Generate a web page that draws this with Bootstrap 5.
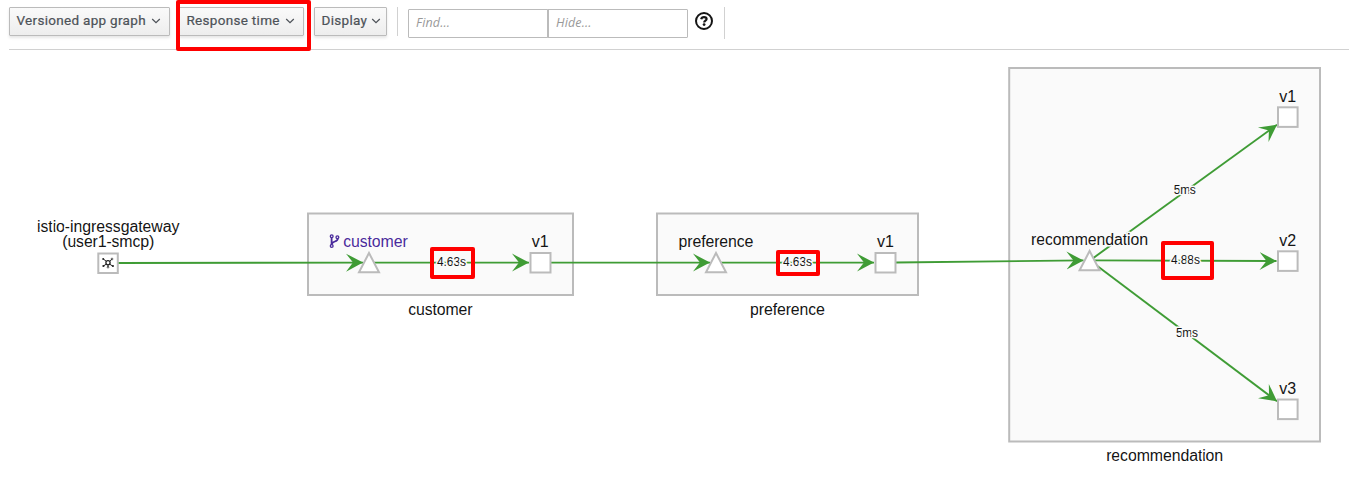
<!DOCTYPE html>
<html lang="en">
<head>
<meta charset="utf-8">
<meta name="viewport" content="width=device-width, initial-scale=1">
<title>Service graph</title>
<link href="https://cdn.jsdelivr.net/npm/bootstrap@5.3.0/dist/css/bootstrap.min.css" rel="stylesheet">
<style>
  body { background: #fff; font-family: "Overpass", "Noto Sans", sans-serif; overflow: hidden; }
  .graph-toolbar { height: 50px; margin-left: 9px; padding-top: 7px; border-bottom: 1px solid #d1d1d1; }
  .btn-graph {
    --bs-btn-color: #4d5258; --bs-btn-border-color: #bbb; --bs-btn-border-radius: 1px;
    --bs-btn-hover-color: #4d5258; --bs-btn-hover-border-color: #bbb;
    height: 29px; padding: 0 8px 2px 6.5px; font: 400 13.5px/25px Roboto, sans-serif;
    letter-spacing: .3px; white-space: nowrap; -webkit-text-stroke: .2px #4d5258;
    background: linear-gradient(#fafafa, #ededed); box-shadow: 0 2px 3px rgba(3,3,3,.1);
  }
  .btn-versions { width: 161px; margin-right: 10px; }
  .btn-edges { width: 125px; margin-right: 9px; }
  .btn-display { width: 73px; margin-right: 10px; padding-right: 5px; }
  .highlight { left: -3px; top: -7px; width: 135px; height: 51px; border: 4px solid #f00; border-radius: 2px; pointer-events: none; }
  .edges-menu { left: -1px; margin-right: -1px; padding-right: 1px; }
  .rule { width: 1px; background: #d1d1d1; }
  .filter-group { width: 280px; margin: 2px 7px 0 10px; }
  .filter-group .form-control {
    height: 29px; padding: 0 7px 3px; border: 1px solid #bbb; border-radius: 1px;
    font: italic 400 12.5px/24px "Open Sans", "Noto Sans", sans-serif; letter-spacing: .15px;
  }
  .filter-group .form-control::placeholder { color: #999; opacity: 1; }
  .filter-group .form-control + .form-control { box-shadow: -1px 0 #bbb; margin-left: 0; }
  .node-label { font: 16px "Liberation Sans", Arial, sans-serif; fill: #151515; text-anchor: middle; stroke: #fafafa; stroke-width: 3px; stroke-linejoin: round; paint-order: stroke; }
  .on-white { stroke: #fff; }
  .edge-label { font-size: 12px; fill: #151515; }
  .edge { stroke: #3f9c35; stroke-width: 1.9; fill: none; }
  .group-box { fill: #fafafa; stroke: #bbb; stroke-width: 2; }
  .shape { fill: #fff; stroke: #bbb; stroke-width: 2; }
  .mark-box { fill: none; stroke: #f00; stroke-width: 4; stroke-linejoin: round; }
</style>
</head>
<body>
<header class="graph-toolbar d-flex align-items-start">
  <button class="btn btn-graph btn-versions d-flex align-items-center justify-content-between" type="button">Versioned app graph
    <svg width="10" height="8" viewBox="0 0 10 8" fill="none" stroke="currentColor" stroke-width="1.2"><path d="m1.2 2 3.8 3.7L8.8 2"/></svg></button>
  <div class="edges-menu position-relative d-flex">
    <button class="btn btn-graph btn-edges d-flex align-items-center justify-content-between" type="button">Response time
      <svg width="10" height="8" viewBox="0 0 10 8" fill="none" stroke="currentColor" stroke-width="1.2"><path d="m1.2 2 3.8 3.7L8.8 2"/></svg></button>
    <span class="highlight position-absolute"></span>
  </div>
  <button class="btn btn-graph btn-display d-flex align-items-center justify-content-between" type="button">Display
    <svg width="10" height="8" viewBox="0 0 10 8" fill="none" stroke="currentColor" stroke-width="1.2"><path d="m1.2 2 3.8 3.7L8.8 2"/></svg></button>
  <span class="rule" style="height:29px"></span>
  <div class="filter-group d-flex">
    <input class="form-control" type="text" placeholder="Find..." aria-label="Find">
    <input class="form-control" type="text" placeholder="Hide..." aria-label="Hide">
  </div>
  <svg class="mt-1" width="18" height="20" viewBox="0 0 18 20" fill="none" stroke="#151515" role="img" aria-label="Help">
    <circle cx="9" cy="10" r="8" stroke-width="2"/>
    <path d="M6.2 8.3C6.5 6.8 7.6 6.1 9 6.1c1.6 0 2.6.8 2.6 2 0 1.5-2.4 1.5-2.4 3.3" stroke-width="2.2"/>
    <circle cx="9.1" cy="13.6" r="1.4" fill="#151515" stroke="none"/>
  </svg>
  <span class="rule" style="height:32px;margin-left:11px"></span>
</header>

<main>
<svg class="d-block" width="1349" height="448" viewBox="0 50 1349 448">
  <defs>
    <marker id="vee" markerUnits="userSpaceOnUse" markerWidth="18" markerHeight="20" refX="17" refY="10" orient="auto">
      <path d="M0 1 17 10 0 19 7 10Z" fill="#3f9c35"/>
    </marker>
  </defs>

  <!-- application groups -->
  <rect class="group-box" x="308" y="213.5" width="265" height="81.5"/>
  <rect class="group-box" x="657" y="213.5" width="261" height="81.5"/>
  <rect class="group-box" x="1009.2" y="68" width="310.8" height="373.5"/>

  <!-- edges -->
  <g class="edge">
    <path marker-end="url(#vee)" d="M118 263 363 262.6"/>
    <path marker-end="url(#vee)" d="M372 262.6H529"/>
    <path marker-end="url(#vee)" d="M550 262.6H710"/>
    <path marker-end="url(#vee)" d="M720 262.6H874"/>
    <path marker-end="url(#vee)" d="M896 262.5 1083.5 260.4"/>
    <path marker-end="url(#vee)" d="M1090 260.4 1277 124.7"/>
    <path marker-end="url(#vee)" d="M1090 260.4 1276.5 261"/>
    <path marker-end="url(#vee)" d="M1090 260.4 1277 401.3"/>
  </g>

  <!-- nodes -->
  <g class="shape">
    <rect x="98.3" y="253.5" width="19.5" height="19.5"/>
    <path d="M369 253 379 272.2H359Z"/>
    <rect x="530.5" y="253" width="20" height="19.5"/>
    <path d="M716 253 726 272.2H706Z"/>
    <rect x="875.5" y="253" width="20" height="19.5"/>
    <path d="M1089.6 251 1099.6 270.2H1079.6Z"/>
    <rect x="1278" y="107.3" width="19.6" height="19.6"/>
    <rect x="1278" y="251.3" width="19.6" height="19.6"/>
    <rect x="1278" y="399.5" width="19.6" height="19.6"/>
  </g>
  <!-- gateway glyph -->
  <g fill="none" stroke="#222" stroke-width="1">
    <path d="M106.2 261.2 103.3 259M109.7 261.4 111.8 259.3M106.2 264.2 103.4 266M109.8 264.2 112.5 266M108 265V267"/>
    <circle cx="108" cy="262.8" r="2.1" stroke-width="1.3"/>
    <circle cx="112" cy="259" r=".9" stroke-width=".7"/>
    <circle cx="108" cy="267.3" r=".8" stroke-width=".7"/>
    <g fill="#222" stroke="none"><circle cx="103.2" cy="259" r="1"/><circle cx="103.4" cy="266" r="1.1"/><circle cx="112.9" cy="266" r="1.1"/></g>
  </g>

  <!-- labels -->
  <text class="node-label on-white" x="108.3" y="231.7" textLength="142.5">istio-ingressgateway</text>
  <text class="node-label on-white" x="108.3" y="247.4" textLength="92">(user1-smcp)</text>
  <text class="node-label" x="375.5" y="247" textLength="64.5" style="fill:#4a2b9c">customer</text>
  <g fill="none" stroke="#4a2b9c" stroke-width="1.3">
    <path d="M331.6 237.4V245M337.8 238.7C337.8 242.2 331.8 240.8 331.8 244.4" stroke-width="1.8"/>
    <circle cx="331.7" cy="236.2" r="1.4"/><circle cx="331.7" cy="246" r="1.4"/><circle cx="337.4" cy="237.3" r="1.4"/>
  </g>
  <text class="node-label" x="540.3" y="247">v1</text>
  <text class="node-label" x="716" y="247" textLength="75">preference</text>
  <text class="node-label" x="885.4" y="247">v1</text>
  <text class="node-label" x="1089.6" y="245" textLength="117">recommendation</text>
  <text class="node-label" x="1287.6" y="101.6">v1</text>
  <text class="node-label" x="1287.6" y="245.6">v2</text>
  <text class="node-label" x="1287.6" y="393.6">v3</text>
  <text class="node-label on-white" x="440.4" y="315" textLength="64.5">customer</text>
  <text class="node-label on-white" x="787.5" y="315" textLength="75">preference</text>
  <text class="node-label on-white" x="1164.7" y="461.4" textLength="117">recommendation</text>

  <text class="node-label edge-label" x="451.5" y="266" textLength="29">4.63s</text>
  <text class="node-label edge-label" x="797.5" y="266" textLength="29">4.63s</text>
  <text class="node-label edge-label" x="1185.4" y="264" textLength="29">4.88s</text>
  <text class="node-label edge-label" x="1184.8" y="194" textLength="22">5ms</text>
  <text class="node-label edge-label" x="1187" y="336.5" textLength="22">5ms</text>

  <!-- highlighted response times -->
  <rect class="mark-box" x="432" y="249" width="41" height="28"/>
  <rect class="mark-box" x="778" y="252" width="40" height="22"/>
  <rect class="mark-box" x="1163" y="243" width="49" height="35"/>
</svg>
</main>
<script src="https://cdn.jsdelivr.net/npm/bootstrap@5.3.0/dist/js/bootstrap.bundle.min.js"></script>
</body>
</html>
